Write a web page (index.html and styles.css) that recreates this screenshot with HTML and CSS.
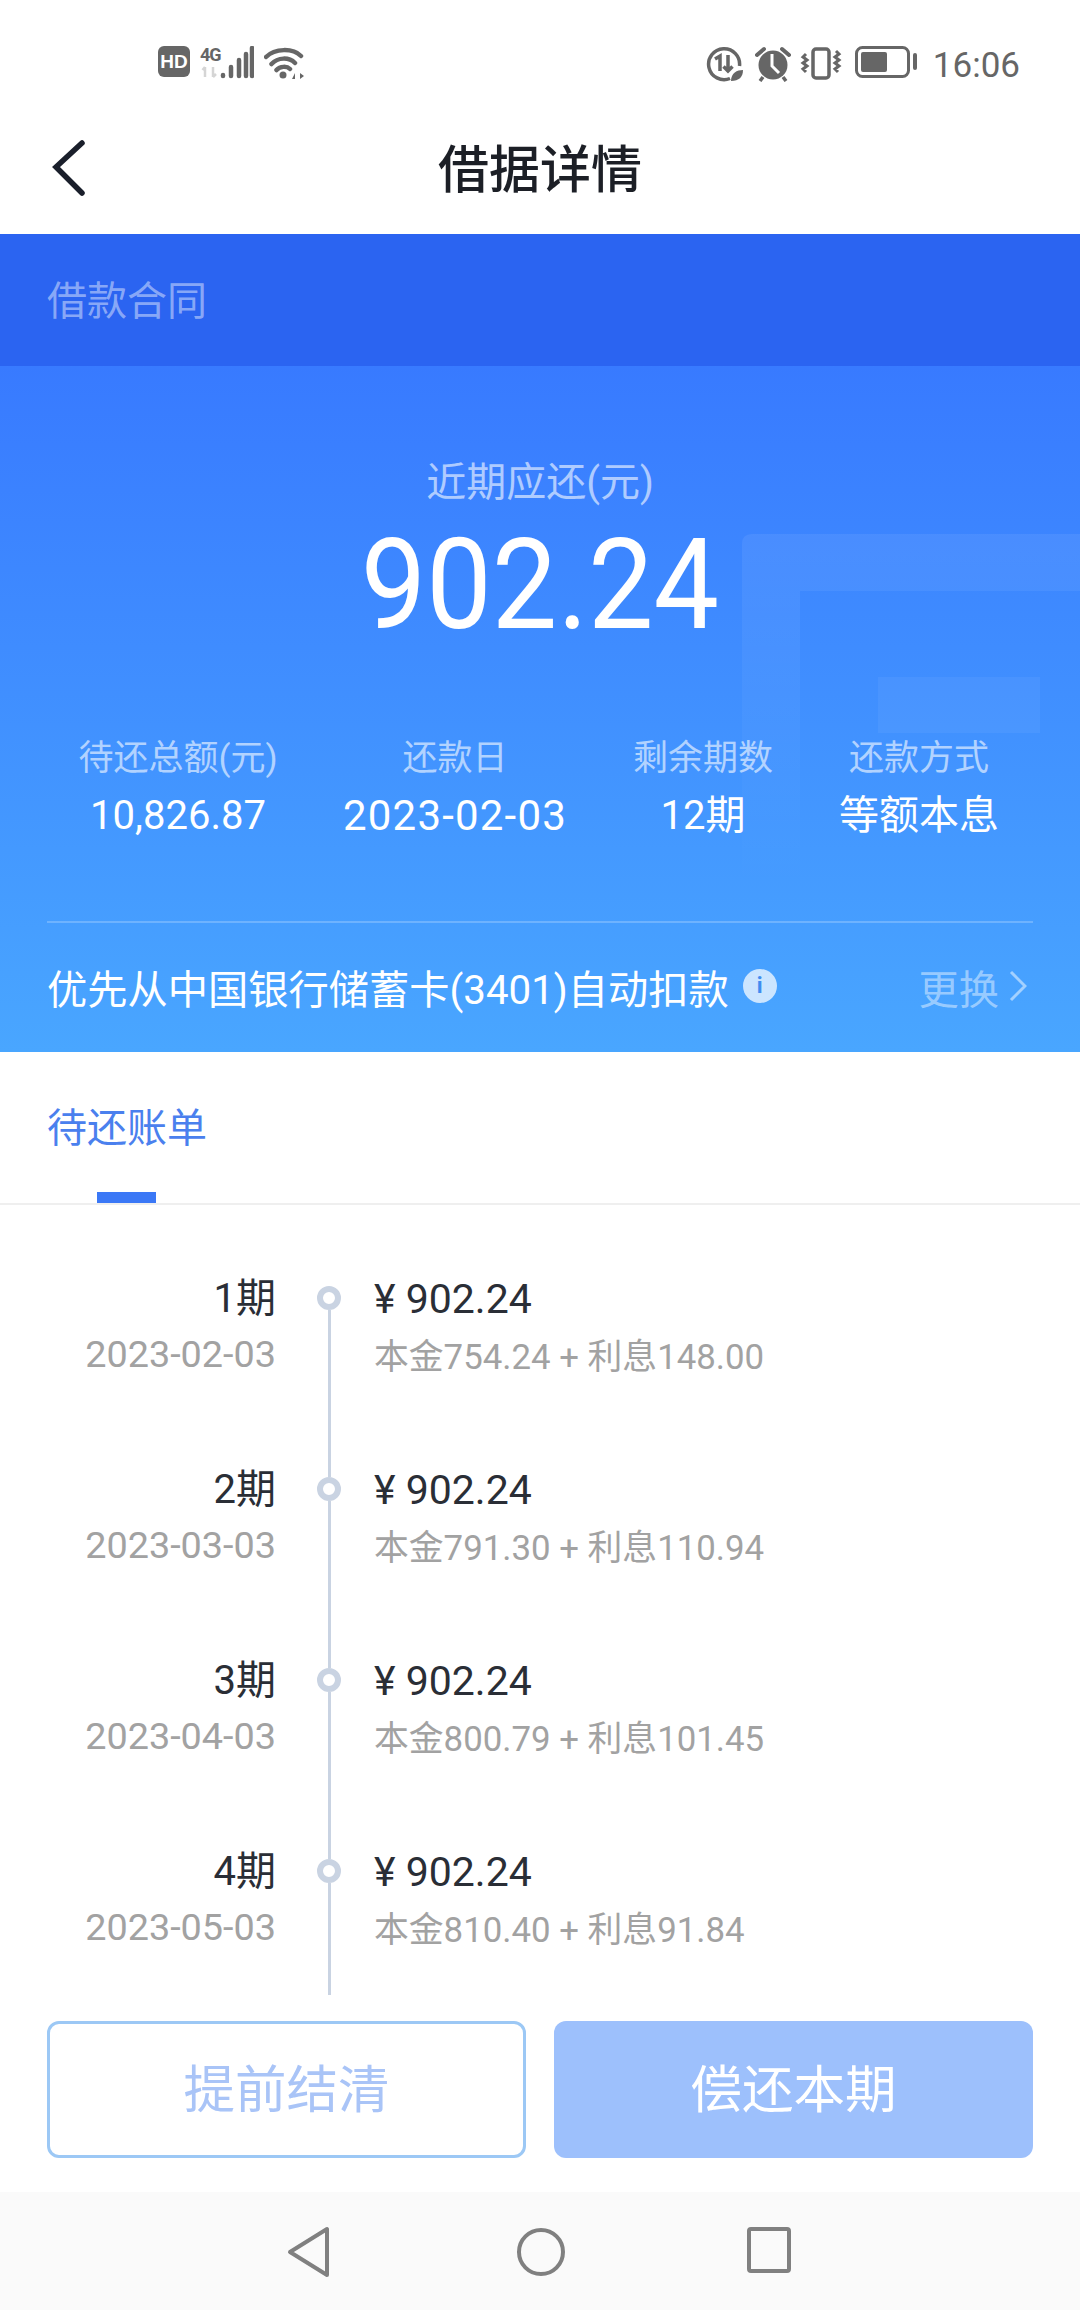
FILE: index.html
```html
<!DOCTYPE html>
<html lang="zh-CN">
<head>
    <meta charset="UTF-8">
    <meta name="viewport" content="width=device-width, initial-scale=1.0">
    <title>借据详情</title>
    <link rel="stylesheet" href="styles.css">
</head>
<body>
    <div class="page">
        <!-- 状态栏 -->
        <div class="status-bar">
            <div class="status-left">
                <span class="hd-badge">HD</span>
                <div class="net">
                    <div class="net-type">
                        <span class="net-text">4G</span>
                        <svg class="icon" width="18" height="12" viewBox="0 0 18 12"><path d="M5 11V1M2.500 4L5 1M13 1V11M13 11L16 8" stroke="#d5d5d5" stroke-width="2.500" fill="none"/></svg>
                    </div>
                    <svg class="icon" width="36" height="34" viewBox="0 0 36 34"><path d="M5 30v-1M13 30V21M21 30V14M28 30V8M34 30V2" stroke="#666" stroke-width="4.500" stroke-linecap="round"/></svg>
                </div>
                <svg class="icon wifi" width="40" height="34" viewBox="0 0 40 34">
                    <path d="M2 11C11 2 29 2 37 10M7.500 18C14 11 25 11 31 17M12.500 24C16 20 23 20 26 23" stroke="#666" stroke-width="4.500" fill="none" stroke-linecap="round"/>
                    <circle cx="19" cy="29" r="3.500" fill="#666"/>
                    <path d="M28 33l3-6v6zM35 26v8M36 27l4 3-4 3z" fill="#666"/>
                </svg>
            </div>
            <div class="status-right">
                <svg class="icon" width="38" height="36" viewBox="0 0 38 36">
                    <path d="M24 32.500A15.500 15.500 0 1 1 33.500 20" stroke="#666" stroke-width="3.500" fill="none"/>
                    <path d="M9 13l5-3v15M22 9v16M17.500 20.500l4.500 4.500 4.500-4.500" stroke="#666" stroke-width="3.500" fill="none"/>
                    <path d="M25 35C25 27 31 24 37 24C37 31 33 35 25 35Z" fill="#666"/>
                </svg>
                <svg class="icon alarm" width="36" height="36" viewBox="0 0 36 36">
                    <circle cx="18" cy="19" r="14.500" fill="#666"/>
                    <path d="M17 8v12l7 7" stroke="#fff" stroke-width="3" fill="none"/>
                    <path d="M2 9L9 3M34 9L27 3" stroke="#666" stroke-width="4" stroke-linecap="round"/>
                    <path d="M8 31l-3 4M28 31l3 4" stroke="#666" stroke-width="3.500"/>
                </svg>
                <svg class="icon vibrate" width="42" height="36" viewBox="0 0 42 36">
                    <rect x="13" y="3" width="16" height="29" rx="3" stroke="#666" stroke-width="3.500" fill="none"/>
                    <path d="M6 8l-3 3 4 3-4 3 4 3-4 3 3 3M36 5l3 3-4 3 4 3-4 3 4 3-4 3 3 3" stroke="#666" stroke-width="3" fill="none"/>
                </svg>
                <svg class="icon battery" width="63" height="32" viewBox="0 0 63 32">
                    <rect x="1.500" y="1.500" width="52" height="29" rx="6" stroke="#666" stroke-width="3" fill="none"/>
                    <rect x="6" y="6" width="26" height="20" rx="2" fill="#666"/>
                    <rect x="58" y="7" width="4" height="17" rx="2" fill="#666"/>
                </svg>
                <span class="clock">16:06</span>
            </div>
        </div>

        <!-- 标题栏 -->
        <div class="title-bar">
            <svg class="back-icon" width="36" height="60" viewBox="0 0 36 60"><path d="M31 5L5 29L31 55" stroke="#1a1f2b" stroke-width="5.500" fill="none" stroke-linecap="round" stroke-linejoin="miter"/></svg>
            <h1>借据详情</h1>
        </div>

        <div class="contract-band">借款合同</div>

        <!-- 金额信息 -->
        <div class="hero">
            <svg class="hero-deco" width="338" height="355" viewBox="0 0 338 355">
                <defs>
                    <linearGradient id="fade" x1="0" y1="0" x2="0" y2="1">
                        <stop offset="0" stop-color="#fff" stop-opacity="0.07"/>
                        <stop offset="1" stop-color="#fff" stop-opacity="0"/>
                    </linearGradient>
                </defs>
                <path d="M0 10Q0 0 10 0H338V57H58V355H0Z" fill="url(#fade)"/>
                <rect x="136" y="143" width="162" height="56" fill="#fff" opacity="0.05"/>
            </svg>
            <div class="due-label">近期应还(元)</div>
            <div class="due-amount">902.24</div>
            <div class="stats">
                <div class="stat"><span class="stat-label">待还总额(元)</span><span class="stat-value">10,826.87</span></div>
                <div class="stat"><span class="stat-label">还款日</span><span class="stat-value stat-date">2023-02-03</span></div>
                <div class="stat"><span class="stat-label">剩余期数</span><span class="stat-value">12期</span></div>
                <div class="stat"><span class="stat-label">还款方式</span><span class="stat-value">等额本息</span></div>
            </div>
            <div class="bank-line">
                <span class="bank-text">优先从中国银行储蓄卡(3401)自动扣款</span>
                <span class="info-icon">i</span>
                <span class="change">更换</span>
                <svg class="change-arrow" width="18" height="32" viewBox="0 0 18 32"><path d="M2 2L16 16L2 30" stroke="#fff" stroke-opacity="0.5" stroke-width="3" fill="none"/></svg>
            </div>
        </div>

        <!-- 待还账单 -->
        <div class="tabs">
            <div class="tab">待还账单<i class="tab-mark"></i></div>
        </div>

        <div class="bill-list">
            <div class="bill">
                <div class="bill-period"><div class="period">1期</div><div class="date">2023-02-03</div></div>
                <div class="rail"><i class="dot"></i><i class="rail-line"></i></div>
                <div class="bill-money"><div class="money">¥ 902.24</div><div class="detail">本金754.24 + 利息148.00</div></div>
            </div>
            <div class="bill">
                <div class="bill-period"><div class="period">2期</div><div class="date">2023-03-03</div></div>
                <div class="rail"><i class="dot"></i><i class="rail-line"></i></div>
                <div class="bill-money"><div class="money">¥ 902.24</div><div class="detail">本金791.30 + 利息110.94</div></div>
            </div>
            <div class="bill">
                <div class="bill-period"><div class="period">3期</div><div class="date">2023-04-03</div></div>
                <div class="rail"><i class="dot"></i><i class="rail-line"></i></div>
                <div class="bill-money"><div class="money">¥ 902.24</div><div class="detail">本金800.79 + 利息101.45</div></div>
            </div>
            <div class="bill">
                <div class="bill-period"><div class="period">4期</div><div class="date">2023-05-03</div></div>
                <div class="rail"><i class="dot"></i><i class="rail-line"></i></div>
                <div class="bill-money"><div class="money">¥ 902.24</div><div class="detail">本金810.40 + 利息91.84</div></div>
            </div>
        </div>

        <div class="actions">
            <div class="btn btn-outline">提前结清</div>
            <div class="btn btn-fill">偿还本期</div>
        </div>

        <!-- 系统导航 -->
        <div class="nav-bar">
            <svg width="44" height="52" viewBox="0 0 44 52"><path d="M40 3V49L3 26Z" stroke="#808080" stroke-width="4" fill="none" stroke-linejoin="round"/></svg>
            <svg width="52" height="52" viewBox="0 0 52 52"><circle cx="26" cy="26" r="22" stroke="#808080" stroke-width="4" fill="none"/></svg>
            <svg width="46" height="48" viewBox="0 0 46 48"><rect x="3" y="3" width="40" height="42" rx="2" stroke="#808080" stroke-width="4" fill="none"/></svg>
        </div>
    </div>
</body>
</html>
```

FILE: styles.css
```css
* {
    box-sizing: border-box;
}
body {
    margin: 0;
    font-family: Roboto, "Noto Sans CJK SC", sans-serif;
    background: #fff;
}
.page {
    width: 1080px;
    height: 2310px;
    display: flex;
    flex-direction: column;
    overflow: hidden;
}
.icon {
    display: block;
}

/* 状态栏 */
.status-bar {
    height: 87px;
    padding: 46px 60px 0 158px;
    display: flex;
    justify-content: space-between;
    align-items: flex-start;
}
.status-left,
.status-right {
    display: flex;
    align-items: flex-start;
}
.status-left {
    gap: 10px;
}
.hd-badge {
    width: 32px;
    height: 31px;
    border-radius: 6px;
    background: #666;
    color: #fff;
    font: 700 19px/31px "Liberation Sans", sans-serif;
    text-align: center;
}
.net {
    width: 54px;
    display: flex;
}
.net-type {
    width: 18px;
    display: flex;
    flex-direction: column;
    gap: 3px;
}
.net-text {
    height: 17px;
    font: 700 18px/17px Roboto, sans-serif;
    letter-spacing: -1.200px;
    color: #666;
}
.alarm {
    margin-left: 11px;
}
.vibrate {
    margin-left: 9px;
}
.battery {
    margin-left: 13px;
}
.clock {
    font-size: 35px;
    line-height: 36px;
    color: #666;
    margin: 2px 0 0 15px;
}

/* 标题栏 */
.title-bar {
    height: 147px;
    padding-top: 10px;
    position: relative;
    display: flex;
    align-items: center;
    justify-content: center;
}
.title-bar h1 {
    margin: 0;
    font-size: 51px;
    font-weight: 500;
    color: #1c1f26;
}
.back-icon {
    position: absolute;
    left: 51px;
    top: 51px;
}

.contract-band {
    height: 132px;
    padding-left: 47px;
    line-height: 136px;
    font-size: 40px;
    color: rgba(255, 255, 255, 0.45);
    background: #2b64f1;
}

/* 金额信息 */
.hero {
    position: relative;
    height: 686px;
    background: linear-gradient(180deg, #387aff 0%, #49a6ff 100%);
    color: #fff;
    padding: 0 47px;
}
.hero-deco {
    position: absolute;
    left: 742px;
    top: 168px;
}
.due-label {
    position: relative;
    padding-top: 90px;
    text-align: center;
    font-size: 40px;
    line-height: 54px;
    color: rgba(255, 255, 255, 0.6);
}
.due-amount {
    position: relative;
    text-align: center;
    font-size: 126px;
    line-height: 130px;
    margin-top: 10px;
    transform: scaleX(0.925);
}
.stats {
    position: relative;
    display: grid;
    grid-template-columns: 262px 292px 204px 228px;
    margin-top: 84px;
    text-align: center;
}
.stat {
    display: flex;
    flex-direction: column;
    align-items: center;
}
.stat-label {
    font-size: 35px;
    line-height: 50px;
    color: rgba(255, 255, 255, 0.6);
}
.stat-value {
    font-size: 40px;
    line-height: 60px;
    margin-top: 2px;
}
.stat-date {
    font-size: 42px;
    letter-spacing: 1.200px;
}
.bank-line {
    position: relative;
    display: flex;
    align-items: center;
    height: 128px;
    margin-top: 75px;
    border-top: 2px solid rgba(255, 255, 255, 0.22);
    font-size: 40.250px;
}
.info-icon {
    width: 34px;
    height: 34px;
    margin-left: 14px;
    border-radius: 50%;
    background: rgba(255, 255, 255, 0.72);
    color: #3f8cf0;
    font-size: 22px;
    font-weight: 700;
    line-height: 34px;
    text-align: center;
}
.change {
    margin-left: auto;
    color: rgba(255, 255, 255, 0.45);
}
.change-arrow {
    margin: 0 6px 0 10px;
}

/* 待还账单 */
.tabs {
    height: 153px;
    padding-left: 47px;
    border-bottom: 2px solid #efefef;
}
.tab {
    position: relative;
    width: 160px;
    height: 151px;
    padding-top: 4px;
    line-height: 146px;
    font-size: 40px;
    color: #4a80ee;
}
.tab-mark {
    position: absolute;
    left: 50px;
    bottom: 0;
    width: 59px;
    height: 11px;
    background: #3b78f6;
}

.bill-list {
    height: 790px;
    overflow: hidden;
    padding-top: 81px;
}
.bill {
    display: grid;
    grid-template-columns: 317px 24px 1fr;
    height: 191px;
}
.bill-period {
    text-align: right;
    padding-right: 41px;
}
.period {
    font-size: 40px;
    line-height: 26px;
    color: #2a2e36;
}
.date {
    font-size: 37.800px;
    line-height: 36px;
    margin-top: 24px;
    color: #a2a2a2;
}
.rail {
    display: flex;
    flex-direction: column;
    align-items: center;
}
.dot {
    width: 24px;
    height: 24px;
    border: 6px solid #c9d3e2;
    border-radius: 50%;
    flex: none;
}
.rail-line {
    width: 3px;
    flex: 1;
    background: #c9d3e2;
}
.bill-money {
    padding-left: 33px;
}
.money {
    font-size: 41px;
    line-height: 26px;
    color: #2a2e36;
}
.detail {
    font-size: 34.800px;
    line-height: 36px;
    margin-top: 27px;
    color: #a2a2a2;
}

.actions {
    height: 197px;
    padding: 26px 47px 0;
    display: grid;
    grid-template-columns: 479px 479px;
    grid-template-rows: 137px;
    column-gap: 28px;
}
.btn {
    border-radius: 12px;
    display: flex;
    align-items: center;
    justify-content: center;
    padding-bottom: 8px;
    font-size: 51.500px;
}
.btn-outline {
    border: 3px solid #9cc8f5;
    color: #a9c4f7;
}
.btn-fill {
    background: #9dc0fc;
    color: #fff;
}

.nav-bar {
    flex: 1;
    background: #fafafa;
    display: flex;
    align-items: flex-start;
    padding: 34px 0 0 287px;
}
.nav-bar svg:nth-child(2) {
    margin-left: 184px;
}
.nav-bar svg:nth-child(3) {
    margin-left: 179px;
}
```
